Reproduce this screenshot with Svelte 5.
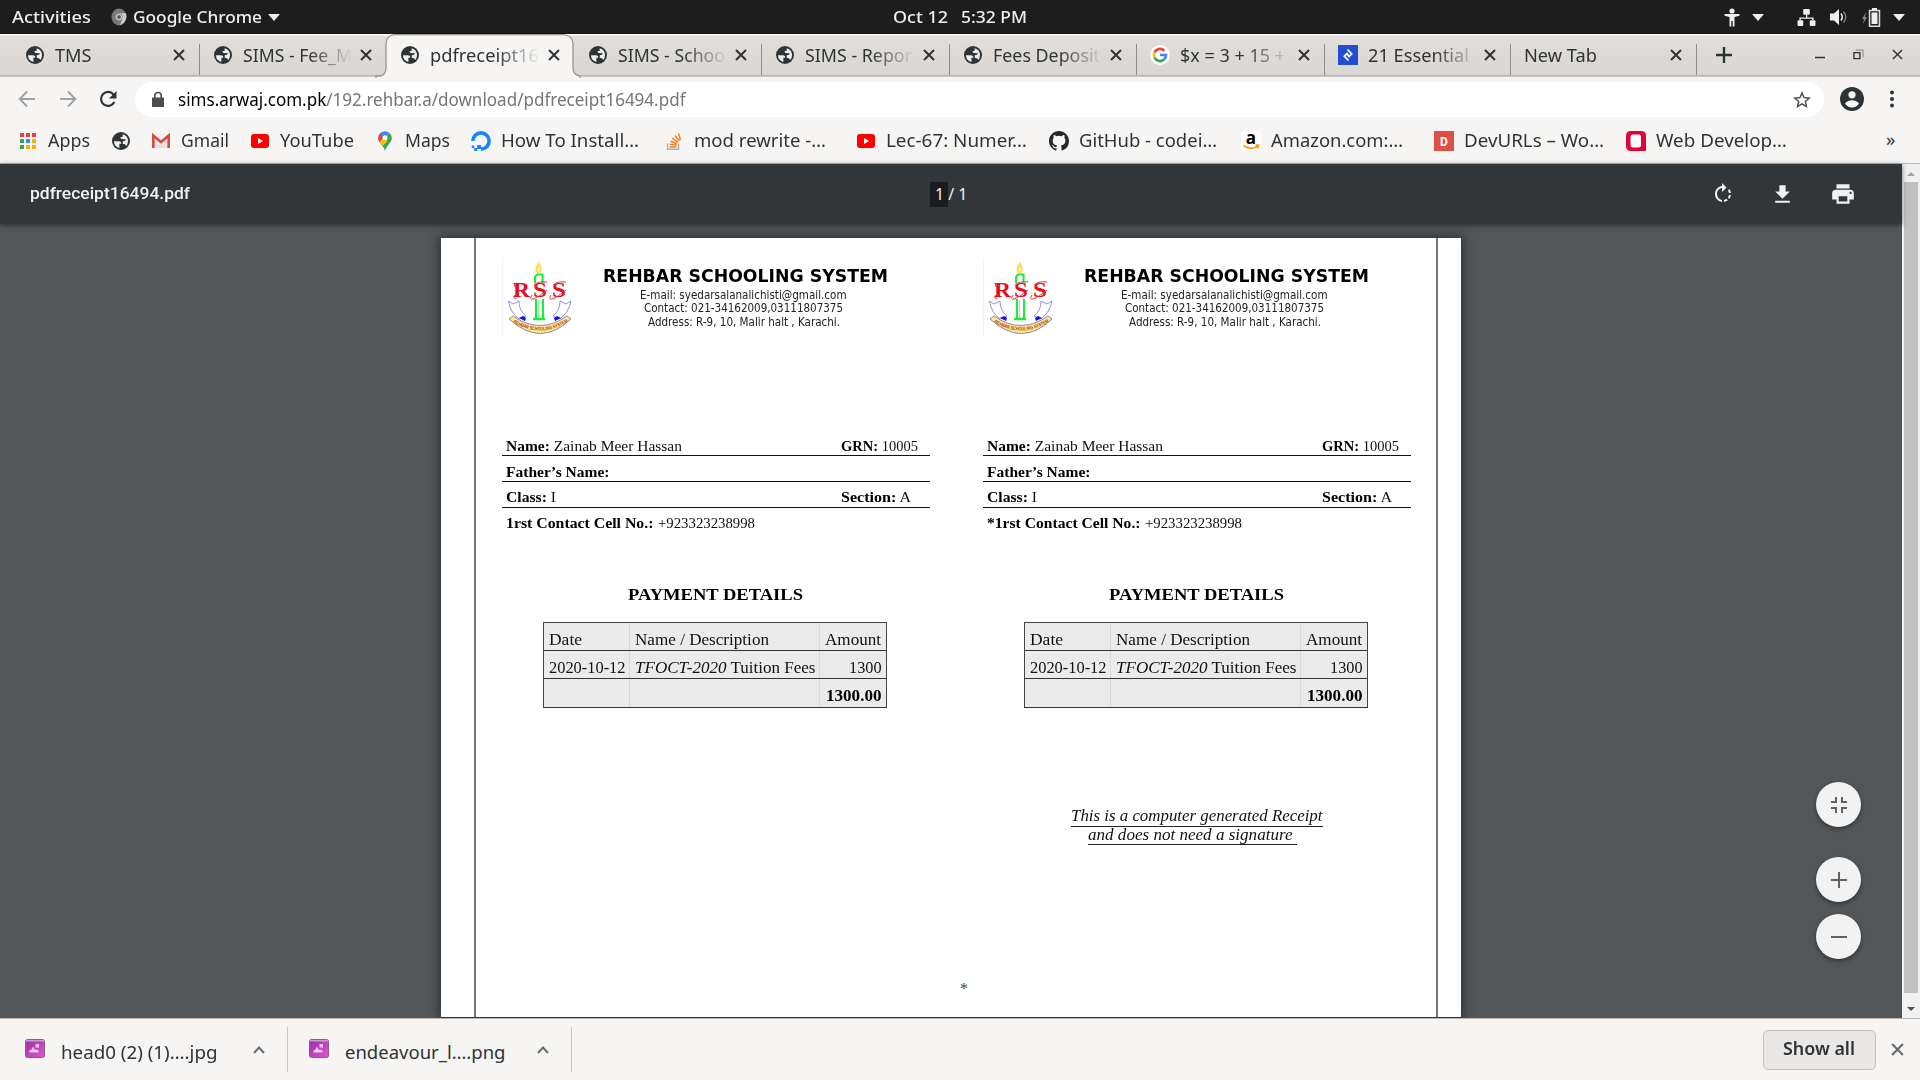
<script>
  // Scales a run of text horizontally so that it fills the given width.
  function fit(node, width) {
    const range = document.createRange();
    range.selectNodeContents(node);
    const natural = range.getBoundingClientRect().width;
    node.style.width = `${width}px`;
    node.style.transform = `scaleX(${width / natural})`;
  }

  const tabs = [
    { icon: 'globe', title: 'TMS', w: 36.5 },
    { icon: 'globe', title: 'SIMS - Fee_M', w: 109 },
    { icon: 'globe', title: 'pdfreceipt16', w: 109, active: true },
    { icon: 'globe', title: 'SIMS - Schoo', w: 107 },
    { icon: 'globe', title: 'SIMS - Repor', w: 107 },
    { icon: 'globe', title: 'Fees Deposit', w: 107 },
    { icon: 'google', title: '$x = 3 + 15 +', w: 105 },
    { icon: 'toptal', title: '21 Essential', w: 101 },
    { icon: null, title: 'New Tab', w: 73 }
  ];

  const bookmarks = [
    { icon: 'apps', label: 'Apps', w: 42, size: 93 },
    { icon: 'globe', label: '', w: 0, size: 40 },
    { icon: 'gmail', label: 'Gmail', w: 48, size: 99 },
    { icon: 'youtube', label: 'YouTube', w: 74, size: 125 },
    { icon: 'maps', label: 'Maps', w: 45, size: 96 },
    { icon: 'ocean', label: 'How To Install…', w: 138, size: 193 },
    { icon: 'stack', label: 'mod rewrite -…', w: 132, size: 192 },
    { icon: 'youtube', label: 'Lec-67: Numer…', w: 141, size: 193 },
    { icon: 'github', label: 'GitHub - codei…', w: 138, size: 192 },
    { icon: 'amazon', label: 'Amazon.com:…', w: 132, size: 193 },
    { icon: 'devurls', label: 'DevURLs – Wo…', w: 140, size: 192 },
    { icon: 'web', label: 'Web Develop…', w: 131, size: 180 }
  ];

  const downloads = [
    { name: 'head0 (2) (1)….jpg', w: 156.5 },
    { name: 'endeavour_l….png', w: 160.5 }
  ];

  const copies = [
    { mark: '', contactWidth: 147.5, note: false },
    { mark: '*', contactWidth: 153.5, note: true }
  ];
</script>

{#snippet icon(name)}
  {#if name === 'globe'}
    <svg class="icon" viewBox="0 0 20 20"><circle cx="10" cy="10" r="9" fill="#2e3436" /><path fill="#f0eeec" d="M3 10.300H8.200Q10.600 10.600 10.300 12.800H8.400V17Q3 15.300 3 10.300zM11.600 3.200Q17 4.600 17 10.300 17 13.200 15.200 15 14.600 13 12.800 13H11.800V10.200Q14.600 10.200 15 8.200L10.400 8 9.300 6.300 11.800 5.700z" /></svg>
  {:else if name === 'google'}
    <svg class="icon" viewBox="0 0 20 20"><circle cx="10" cy="10" r="10" fill="#fff" />
      <g fill="none" stroke-width="2.700"><path stroke="#ea4335" d="M4.600 7.300A6 6 0 0 1 14.300 5.800" /><path stroke="#fbbc05" d="M4.600 12.700A6 6 0 0 1 4.600 7.300" /><path stroke="#34a853" d="M4.600 12.700A6 6 0 0 0 14 14.500" /><path stroke="#4285f4" d="M10 10H16A6 6 0 0 1 14 14.500" /></g></svg>
  {:else if name === 'toptal'}
    <svg class="icon" viewBox="0 0 20 20"><path fill="#204ecf" d="M0 0h20v20H0z" /><path fill="none" stroke="#fff" stroke-width="1.700" d="M9.500 4.500l4.200 4.500-3.400 3.200M10.500 15.500l-4.200-4.300 3.400-3.400M8.200 8.200l3.700 3.800" /></svg>
  {:else if name === 'apps'}
    <svg class="icon" viewBox="0 0 20 20"><path fill="#f23a3a" d="M2 2h4v4H2zM8 2h4v4H8zM14 2h4v4h-4z" /><path fill="#34a853" d="M2 8h4v4H2zM2 14h4v4H2z" /><path fill="#2f8af5" d="M8 8h4v4H8z" /><path fill="#fbac05" d="M14 8h4v4h-4zM8 14h4v4H8zM14 14h4v4h-4z" /></svg>
  {:else if name === 'gmail'}
    <svg class="icon" viewBox="0 0 20 20"><path fill="#e4e4e4" d="M1 3.500h18v13.500H1z" /><path fill="#f7f7f7" d="M3 4l7 6 7-6z" /><path fill="none" stroke="#d54b3d" stroke-width="2.600" d="M2.300 17V4.500L10 11l7.700-6.500V17" /></svg>
  {:else if name === 'youtube'}
    <svg class="icon" viewBox="0 0 20 20"><rect x="1" y="3" width="18" height="14" rx="3" fill="#f00" /><path fill="#fff" d="M8 7l5 3-5 3z" /></svg>
  {:else if name === 'maps'}
    <svg class="icon" viewBox="0 0 20 20"><path fill="#34a853" d="M10 20C9 15 3.500 12 3.200 6.800h13.600C16.500 12 11 15 10 20z" /><path fill="#fbbc05" d="M4.300 10.500L13 4l2 4-7.500 7z" /><path fill="#ea4335" d="M3.200 7A6.800 6.800 0 0 1 4.800 2.500L8.800 6l-4.500 5Q3.200 9 3.200 7z" /><path fill="#4285f4" d="M4.800 2.500A6.800 6.800 0 0 1 14.500 2L9.500 8z" /><path fill="#34a853" d="M14.500 2a6.800 6.800 0 0 1 1.300 8L12 12V5z" /><circle cx="10" cy="6.800" r="2.500" fill="#fff" /></svg>
  {:else if name === 'ocean'}
    <svg class="icon" viewBox="0 0 20 20"><path fill="none" stroke="#1588ff" stroke-width="3.600" d="M1.900 10A8.100 8.100 0 1 1 10 18.100" /><path fill="#1588ff" d="M6.200 14H10v4H6.200zM3.200 17h3v3h-3zM.8 14.500h2.400V17H.8z" /></svg>
  {:else if name === 'stack'}
    <svg class="icon" viewBox="0 0 20 20"><path fill="none" stroke="#aeb2b5" stroke-width="1.500" d="M3.500 12.500v5.700h11v-5.700" /><path fill="none" stroke="#f48024" stroke-width="1.500" d="M5.500 16h7M5.700 13.200l7 1M6.500 10.200l6.500 2.500M8.300 7.200l5.700 4.200M11 4.500l4.300 5.500M14.500 2.500l2 6.500" /></svg>
  {:else if name === 'github'}
    <svg class="icon" viewBox="0 0 16 16"><path fill="#24292e" d="M8 0C3.580 0 0 3.580 0 8c0 3.540 2.290 6.530 5.470 7.590.4.070.55-.17.55-.38 0-.19-.01-.82-.01-1.490-2.010.37-2.530-.49-2.690-.94-.09-.23-.48-.94-.82-1.130-.28-.15-.68-.52-.01-.53.63-.01 1.080.58 1.230.82.72 1.210 1.870.87 2.330.66.070-.52.28-.87.51-1.070-1.780-.2-3.640-.89-3.640-3.950 0-.87.31-1.590.82-2.150-.08-.2-.36-1.020.08-2.120 0 0 .67-.21 2.200.82a7.600 7.600 0 0 1 4 0c1.530-1.040 2.200-.82 2.200-.82.44 1.100.16 1.920.08 2.120.51.56.82 1.270.82 2.150 0 3.070-1.870 3.750-3.650 3.950.29.25.54.73.54 1.480 0 1.070-.01 1.930-.01 2.200 0 .21.15.46.55.38A8 8 0 0 0 16 8c0-4.420-3.580-8-8-8z" /></svg>
  {:else if name === 'amazon'}
    <svg class="icon" viewBox="0 0 20 20"><rect width="20" height="20" rx="3" fill="#fff" /><text x="10" y="12.800" text-anchor="middle" class="amazon-a">a</text><path fill="none" stroke="#f90" stroke-width="1.700" d="M2.500 14.800q7 4.500 14 .8M14.500 14.300l3-.1-.8 3" /></svg>
  {:else if name === 'devurls'}
    <svg class="icon" viewBox="0 0 20 20"><path fill="#dd5144" d="M0 0h20v20H0z" /><text x="10" y="14.500" text-anchor="middle" class="dev-d">D</text></svg>
  {:else if name === 'web'}
    <svg class="icon" viewBox="0 0 20 20"><path fill="#e4003a" d="M5 0h10q5 0 5 5v15H5q-5 0-5-5V5q0-5 5-5z" /><rect x="4.500" y="3.500" width="10.500" height="13" rx="2.500" fill="#fff" /></svg>
  {/if}
{/snippet}

{#snippet cross(size, weight)}
  <svg width={size} height={size} viewBox="0 0 12 12"><path d="M1 1l10 10M11 1L1 11" fill="none" stroke="currentColor" stroke-width={weight} /></svg>
{/snippet}

{#snippet logo()}
  <svg class="logo" viewBox="0 0 70 78">
    <path d="M.5 0v78" stroke="#f3f3f3" />
    <path fill="#fff" stroke="#16ee3a" stroke-width="2" d="M33 25v-6l2-2.500h5.500V25M34 41v20M41 41v20" />
    <path stroke="#8af59b" d="M36.500 42v18" />
    <path stroke="#16ee3a" stroke-width="2.500" d="M31 61h12" />
    <path fill="#ffd95a" d="M37 4q4 6 2 10-2 3-5 0-2-4 3-10z" /><path fill="#fff3a0" d="M37 8q2 3 0 6-3-2 0-6z" />
    <g fill="#fff" stroke="#8484d8" stroke-width=".9"><path d="M6.500 43l4.500 3 6-3q0 10 7 15l-7 3Q8 54 6.500 43zM69 43l-5 3-6-3q0 10-7 15l7 3q9-7 11-18z" /></g>
    <path fill="#1414d8" d="M17 60l4-2 3 2-1 3zM59 60l-4-2-3 2 1 3z" />
    <path fill="#ffe98c" stroke="#6a6ab5" stroke-width=".8" d="M7 61l4-3q27 19 54 0l4 3q-30 29-62 0z" />
    <path id="banner" fill="none" d="M11 64.500q27 16 54 0" />
    <text class="banner-text"><textPath href="#banner" textLength="58" lengthAdjust="spacingAndGlyphs">REHBAR SCHOOLING SYSTEM</textPath></text>
    <text class="letters" x="11" y="38.500" textLength="17" lengthAdjust="spacingAndGlyphs">R</text><text class="letters" x="31" y="38.500" textLength="14" lengthAdjust="spacingAndGlyphs">S</text><text class="letters" x="50" y="38.500" textLength="14" lengthAdjust="spacingAndGlyphs">S</text>
    <path fill="none" stroke="#e5202c" stroke-width=".9" d="M15 25q-4 1-2 4M14 41q-4-1-1-4l4 2M30 37q-3 5 1 4t14-9M49 37q-3 5 1 4t14-9M32 27q4-4 13-3M51 27q4-4 13-3" />
  </svg>
{/snippet}

<div class="desktop">
  <header class="panel">
    <div class="panel-left">
      <span class="fit" use:fit={79}>Activities</span>
      <svg class="chrome" width="16" height="18" viewBox="0 0 17 19"><ellipse cx="8.500" cy="9.500" rx="8" ry="9" fill="#777" /><path fill="#cfcfcf" d="M8.500 5.500H16q2 8-6.500 13l2.500-7z" /><circle cx="8.500" cy="9.500" r="4" fill="#999" /><circle cx="8.500" cy="9.500" r="2.600" fill="#555" stroke="#ddd" /></svg>
      <span class="fit" use:fit={129}>Google Chrome</span>
      <i class="caret"></i>
    </div>
    <div class="clock"><span class="fit" use:fit={55}>Oct 12</span><span class="fit" use:fit={66}>5:32 PM</span></div>
    <div class="panel-right">
      <svg width="16" height="19" viewBox="0 0 16 19"><g fill="#eee"><circle cx="8" cy="3" r="2.600" /><path d="M.5 6h15v1.800L10.500 9v9.500H8.700V13H7.300v5.500H5.500V9L.5 7.800z" /></g></svg>
      <i class="caret"></i>
      <svg class="net" width="19" height="17" viewBox="0 0 19 18"><g fill="#eee"><rect x="6" width="7" height="6" rx="1" /><rect y="12" width="6" height="6" rx="1" /><rect x="13" y="12" width="6" height="6" rx="1" /><path d="M9 6h1.300v3H17v3h-1.500v-1.600h-12V12H2V9h7z" /></g></svg>
      <svg class="vol" width="19" height="18" viewBox="0 0 19 18"><path fill="#eee" d="M0 5.500h4L9 1v16l-5-4.500H0z" /><path fill="none" stroke="#eee" stroke-width="1.500" d="M11 5.500q2.500 3.500 0 7" /><path fill="none" stroke="#888" stroke-width="1.300" d="M13.500 3.500q4.500 5.500 0 11" /></svg>
      <svg class="bat" width="19" height="19" viewBox="0 0 19 19"><path fill="#888" d="M4 4L0 11h2l-1 5 4-7H3z" /><path fill="none" stroke="#ddd" stroke-width="1.500" d="M7.500 2.500h10v15.700h-10z" /><path fill="#eee" d="M10 0h5v2h-5zM9.500 4.500h6v11.500h-6z" /></svg>
      <i class="caret"></i>
    </div>
  </header>

  <nav class="tabs">
    {#each tabs as tab}
      <div class="tab" class:active={tab.active} class:blank={!tab.icon}>
        {#if tab.active}<svg class="shape" viewBox="0 0 200 43" width="200" height="43"><path fill="#f6f5f3" stroke="#989692" stroke-width="1.300" d="M-3 44V42H1Q7 41 7 34V9Q8 1 16 .7H184Q193 1 194 9V34Q194 41 201 42V44" /></svg>{/if}
        {#if tab.icon}<span class="favicon">{@render icon(tab.icon)}</span>{/if}
        <span class="title" class:fade={tab.w > 80}><span class="fit" use:fit={tab.w}>{tab.title}</span></span>
        <span class="close">{@render cross(12, 2)}</span>
      </div>
    {/each}
    <svg class="plus" width="16" height="16" viewBox="0 0 16 16"><path stroke="#2e3436" stroke-width="2.400" d="M8 0v16M0 8h16" /></svg>
    <div class="window-buttons">
      <svg width="10" height="12" viewBox="0 0 10 12"><path stroke="#2e3436" stroke-width="1.500" d="M0 8.500h10" /></svg>
      <svg width="11" height="11" viewBox="0 0 12 12"><path fill="none" stroke="#999" stroke-width="1.300" d="M3 1.300h8v8" /><path fill="none" stroke="#2e3436" stroke-width="1.500" d="M1 4h6.500v6.500H1z" /></svg>
      {@render cross(11, 1.500)}
    </div>
  </nav>

  <div class="toolbar">
    <div class="nav-icons">
      <svg width="18" height="18" viewBox="0 0 18 18"><path fill="none" stroke="#a0a2a2" stroke-width="1.800" d="M17 9H2M9 1.500L1.700 9 9 16.500" /></svg>
      <svg width="18" height="18" viewBox="0 0 18 18"><path fill="none" stroke="#a0a2a2" stroke-width="1.800" d="M1 9h15M9 1.500L16.300 9 9 16.500" /></svg>
      <svg width="18" height="18" viewBox="0 0 18 18"><path fill="none" stroke="#2e3436" stroke-width="2.200" d="M15.300 12A7 7 0 1 1 14.500 4.600" /><path fill="#2e3436" d="M17.500 1v7.500H10z" /></svg>
    </div>
    <div class="omnibox">
      <svg width="12" height="15" viewBox="0 0 12 15"><path fill="#4b4d4e" d="M0 5.500h12V15H0z" /><path fill="none" stroke="#4b4d4e" stroke-width="1.600" d="M2.800 6V3.700a3.200 3.200 0 0 1 6.400 0V6" /></svg>
      <span class="url fit" use:fit={507.500}><b>sims.arwaj.com.pk</b>/192.rehbar.a/download/pdfreceipt16494.pdf</span>
      <svg class="star" width="18" height="18" viewBox="2 2 20 20"><path fill="#4b4d4e" d="M22 9.240l-7.190-.62L12 2 9.190 8.630 2 9.240l5.460 4.730L5.820 21 12 17.270 18.180 21l-1.630-7.030L22 9.240zM12 15.400l-3.760 2.270 1-4.280-3.320-2.880 4.380-.38L12 6.100l1.710 4.040 4.380.38-3.320 2.880 1 4.280L12 15.400z" /></svg>
    </div>
    <svg class="profile" width="24" height="24" viewBox="0 0 24 24"><circle cx="12" cy="12" r="12" fill="#2e3436" /><circle cx="12" cy="7.800" r="3.600" fill="#f6f5f3" /><path fill="#f6f5f3" d="M5 16.500q3-3.300 7-3.300t7 3.300q-2.500 4-7 4t-7-4z" /></svg>
    <svg width="4" height="18" viewBox="0 0 4 18"><g fill="#2e3436"><circle cx="2" cy="2.500" r="2" /><circle cx="2" cy="9" r="2" /><circle cx="2" cy="15.500" r="2" /></g></svg>
  </div>

  <div class="bookmarks">
    {#each bookmarks as b}
      <div class="bookmark" style:width="{b.size}px">
        {@render icon(b.icon)}
        {#if b.label}<span class="fit" use:fit={b.w}>{b.label}</span>{/if}
      </div>
    {/each}
    <span class="more">»</span>
  </div>

  <div class="viewer">
    <main>
      <div class="pdf-bar">
        <span class="file fit" use:fit={160}>pdfreceipt16494.pdf</span>
        <span class="pages"><span class="current">1</span><span>/ 1</span></span>
        <div class="pdf-tools">
          <svg width="24" height="24" viewBox="0 0 24 24"><path fill="#f1f1f1" d="M15.550 5.550L11 1v3.070C7.060 4.560 4 7.920 4 12s3.050 7.440 7 7.930v-2.020c-2.840-.48-5-2.940-5-5.910s2.160-5.430 5-5.910V10l4.550-4.450zM19.930 11c-.17-1.390-.72-2.730-1.620-3.890l-1.420 1.420c.54.75.88 1.600 1.020 2.470h2.020zM13 17.900v2.020c1.390-.17 2.740-.71 3.900-1.610l-1.440-1.440c-.75.54-1.590.89-2.460 1.030zm3.890-2.420l1.420 1.410c.9-1.160 1.450-2.500 1.620-3.890h-2.020c-.14.87-.48 1.720-1.020 2.480z" /></svg>
          <svg width="25" height="25" viewBox="0 0 24 24"><path fill="#f1f1f1" d="M19 9h-4V3H9v6H5l7 7 7-7zM5 18v2h14v-2H5z" /></svg>
          <svg width="26" height="26" viewBox="0 0 24 24"><path fill="#f1f1f1" d="M19 8H5c-1.660 0-3 1.340-3 3v6h4v4h12v-4h4v-6c0-1.660-1.340-3-3-3zm-3 11H8v-5h8v5zm3-7c-.55 0-1-.45-1-1s.45-1 1-1 1 .45 1 1-.45 1-1 1zm-1-9H6v4h12V3z" /></svg>
        </div>
      </div>

      <div class="canvas">
        <article class="page">
          <div class="sheet">
            {#each copies as copy}
              <section>
                <div class="head">
                  {@render logo()}
                  <div class="school">
                    <h1 class="fit" use:fit={285}>REHBAR SCHOOLING SYSTEM</h1>
                    <p class="fit" use:fit={206.500}>E-mail: syedarsalanalichisti@gmail.com</p>
                    <p class="fit" use:fit={199}>Contact: 021-34162009,03111807375</p>
                    <p class="fit address" use:fit={192}>Address: R-9, 10, Malir halt , Karachi.</p>
                  </div>
                </div>
                <div class="field"><span class="fit" use:fit={176}><b>Name:</b> Zainab Meer Hassan</span><span class="second"><span class="fit" use:fit={77}><b>GRN:</b> 10005</span></span></div>
                <div class="field"><span class="fit" use:fit={103.500}><b>Father’s Name:</b></span></div>
                <div class="field low"><span class="fit" use:fit={50}><b>Class:</b> I</span><span class="second"><span class="fit" use:fit={70}><b>Section:</b> A</span></span></div>
                <div class="field low last"><b class="fit" use:fit={copy.contactWidth}>{copy.mark}1rst Contact Cell No.:</b><span class="phone fit" use:fit={97}>+923323238998</span></div>
                <h2><span class="fit" use:fit={175}>PAYMENT DETAILS</span></h2>
                <div class="table">
                  <div class="row">
                    <span class="cell"><span class="fit" use:fit={33}>Date</span></span>
                    <span class="cell"><span class="fit" use:fit={134}>Name / Description</span></span>
                    <span class="cell end"><span class="fit" use:fit={56}>Amount</span></span>
                  </div>
                  <div class="row">
                    <span class="cell"><span class="fit" use:fit={76.500}>2020-10-12</span></span>
                    <span class="cell"><span class="fit" use:fit={180.500}><em>TFOCT-2020</em> Tuition Fees</span></span>
                    <span class="cell end"><span class="fit" use:fit={32.500}>1300</span></span>
                  </div>
                  <div class="row">
                    <span class="cell"></span>
                    <span class="cell"></span>
                    <span class="cell end"><b class="fit" use:fit={55.500}>1300.00</b></span>
                  </div>
                </div>
                {#if copy.note}
                  <div class="note">
                    <div class="line"><em class="fit" use:fit={251.500}>This is a computer generated Receipt</em></div>
                    <div class="line short"><em class="fit" use:fit={204.500}>and does not need a signature</em></div>
                  </div>
                {/if}
              </section>
            {/each}
          </div>
          <div class="star-mark">*</div>
        </article>
        <div class="zoom">
          <button aria-label="Fit to page"><svg width="16" height="16" viewBox="0 0 16 16"><path fill="none" stroke="#616161" stroke-width="2" d="M0 5h5V0M11 0v5h5M0 11h5v5M11 16v-5h5" /></svg></button>
          <button aria-label="Zoom in"><svg width="16" height="16" viewBox="0 0 16 16"><path stroke="#616161" stroke-width="2" d="M8 0v16M0 8h16" /></svg></button>
          <button aria-label="Zoom out"><svg width="16" height="16" viewBox="0 0 16 16"><path stroke="#616161" stroke-width="2" d="M0 8h16" /></svg></button>
        </div>
      </div>
    </main>
    <aside class="scroll">
      <i class="up"></i>
      <div class="thumb"></div>
      <i class="down"></i>
    </aside>
  </div>

  <footer>
    {#each downloads as d}
      <div class="download">
        <svg width="20" height="19" viewBox="0 0 20 19"><defs><linearGradient id="pic" x2="1" y2="1"><stop stop-color="#9a2fa5" /><stop offset="1" stop-color="#df58ce" /></linearGradient></defs><rect x=".5" y=".5" width="19" height="18" rx="2" fill="url(#pic)" stroke="#8a5b8c" /><path fill="#cf9bd3" d="M1 1h18v1.500H1z" /><path fill="#f3c6f0" d="M4.500 13.500v-2l2-1 1.500-3 1.500 3 4 .5v2.500zM10.500 5h3.500v3.500h-3.500z" /></svg>
        <span class="fit" use:fit={d.w}>{d.name}</span>
        <svg class="chev" width="12" height="8" viewBox="0 0 12 8"><path fill="none" stroke="#6b6f70" stroke-width="2" d="M1 7l5-5.500L11 7" /></svg>
      </div>
    {/each}
    <button class="show"><span class="fit" use:fit={72}>Show all</span></button>
    <span class="dismiss">{@render cross(13, 1.900)}</span>
  </footer>
</div>

<style>
  :global(body) { margin: 0; overflow: hidden; }
  .desktop { width: 1920px; height: 1080px; display: flex; flex-direction: column; overflow: hidden; background: #f6f5f3; color: #2e3436; font-family: "Noto Sans", "Open Sans", sans-serif; font-size: 18.500px; line-height: 24px; }
  .desktop * { box-sizing: border-box; }
  svg { display: block; flex: none; overflow: visible; }
  .icon { width: 20px; height: 20px; }
  .fit { display: inline-block; flex: none; white-space: pre; text-align: left; transform-origin: left center; }
  .amazon-a { font: bold 17px "Open Sans", sans-serif; fill: #000; }
  .dev-d { font: bold 12px Roboto, sans-serif; fill: #fff; }

  .panel { height: 34px; flex: none; display: grid; grid-template-columns: 893px 1fr auto; align-items: center; background: #1d1d1d; color: #eee; font-size: 16.300px; font-weight: 500; border-bottom: 1px solid #171217; padding-top: 1px; }
  .panel-left { display: flex; align-items: center; padding-left: 12px; }
  .chrome { margin: 0 6px 0 20px; }
  .clock { display: flex; gap: 13px; }
  .panel-right { display: flex; align-items: center; padding-right: 15.500px; }
  .panel-right .caret { margin-left: 12px; }
  .caret { border: 6.500px solid transparent; border-top: 7px solid #eee; border-bottom: 0; }
  .panel-left .caret { margin-left: 6px; }
  .net { margin-left: 33px; }
  .vol { margin-left: 14px; }
  .bat { margin-left: 13px; }

  .tabs { height: 43px; flex: none; display: flex; align-items: center; padding: 0 17px 0 11px; background: linear-gradient(#fff 1px, #e1dedb 2px, #dad6d2 41px, #989692 42px, #f6f5f3 43px); }
  .tab { position: relative; width: 187.500px; height: 43px; flex: none; display: flex; align-items: center; padding: 0 0 2px 14px; }
  .tab:nth-child(n + 8) { width: 186.100px; }
  .tab::after { content: ""; position: absolute; right: -1px; top: 10px; width: 1px; height: 31px; background: #8f8d89; }
  .tab:nth-child(2)::after, .tab.active::after { display: none; }
  .shape { position: absolute; left: -7px; top: 0; }
  .favicon { position: relative; margin-right: 10px; }
  .title { position: relative; width: 110px; height: 26px; line-height: 26px; }
  .fade { -webkit-mask-image: linear-gradient(90deg, #000 60%, transparent 100%); mask-image: linear-gradient(90deg, #000 60%, transparent 100%); }
  .blank .title { width: 140px; }
  .close { position: relative; margin-left: 7.500px; }
  .tab:nth-child(n + 8) .close { margin-left: 6px; }
  .plus { margin: -2px 0 0 20px; }
  .window-buttons { margin: -2px 0 0 auto; display: flex; align-items: center; gap: 28px; }

  .toolbar { height: 44px; flex: none; display: flex; align-items: center; padding: 0 26px 0 18px; }
  .nav-icons { display: flex; gap: 22.500px; width: 117px; }
  .omnibox { width: 1690px; height: 35px; border-radius: 18px; background: #fff; display: flex; align-items: center; padding: 0 13px 0 17px; margin-top: 1px; }
  .url { margin: -2px 0 0 14px; font-size: 17.500px; color: #747677; }
  .url b { font-weight: 400; color: #000; }
  .star { margin-left: auto; }
  .profile { margin: 0 26px 0 16px; }

  .bookmarks { height: 43px; flex: none; display: flex; align-items: center; padding: 0 0 3px 18px; border-bottom: 1px solid #bdb9b5; }
  .bookmark { display: flex; flex: none; align-items: center; gap: 10px; }
  .bookmark .fit { margin-top: -2px; }
  .more { margin: -3px 0 0 80px; }

  .viewer { flex: 1; min-height: 0; display: flex; }
  main { width: 1902px; background: #525659; display: flex; flex-direction: column; }
  .pdf-bar { position: relative; z-index: 1; height: 60px; flex: none; display: grid; grid-template-columns: 900px 1fr auto; align-items: center; padding: 0 47px 0 30px; background: #323639; color: #f1f1f1; box-shadow: 0 1px 5px rgba(0, 0, 0, 0.5); }
  .file { font: 500 17.200px/24px Roboto, sans-serif; margin-top: -2px; }
  .pages { display: flex; font-size: 16px; }
  .current { background: #191b1c; padding: 0 4px 1px 5px; }
  .pdf-tools { display: flex; align-items: center; gap: 35px; margin-right: -0.500px; }
  .canvas { flex: 1; min-height: 0; overflow: hidden; display: flex; padding: 14px 41px 0 441px; }
  .page { width: 1020px; flex: none; background: #fff; box-shadow: 0 0 10px 2px rgba(0, 0, 0, 0.45); padding: 0 23px 0 32.500px; border-bottom: 1px solid #333; color: #111; font-family: "Liberation Serif", serif; display: flex; flex-direction: column; }
  .sheet { flex: 1; min-height: 0; border: solid #777; border-width: 0 2px; display: grid; grid-template-columns: 481px 481px; padding-left: 26px; }
  section { width: 428px; }
  .head { height: 199px; display: flex; padding-top: 20px; }
  .logo { width: 70px; height: 78px; }
  .letters { font: bold 21px "Liberation Serif", serif; fill: #e5101c; }
  .banner-text { font: bold 5px "Liberation Sans", sans-serif; fill: #b5421c; }
  .school { margin-left: 31.500px; width: 285px; flex: none; display: flex; flex-direction: column; align-items: center; font-family: "DejaVu Sans", sans-serif; }
  h1 { margin: 6px 0 1px; font-size: 18.500px; line-height: 24px; color: #000; }
  p { margin: 0 4px 0 0; font-size: 11.600px; line-height: 12.500px; color: #222; }
  .address { margin-top: 2px; }
  .field { height: 26px; padding: 0 5px 1px 4.500px; border-bottom: 1px solid #111; display: flex; align-items: flex-end; font-size: 15.300px; line-height: 17px; }
  .field:nth-child(2) { height: 19px; }
  .field.low { padding-bottom: 2px; }
  .field.last { border-color: transparent; }
  .phone { margin-left: 4px; }
  .second { margin-left: auto; width: 84px; }
  .field b, .row b { color: #000; }
  h2 { margin: 49px 0 17px; height: 22px; font-size: 17.500px; line-height: 22px; color: #000; padding-left: 126px; }
  .table { width: 344px; margin-left: 41.500px; background: #ebebeb; border: solid #444; border-width: 1px 1.500px; border-bottom-color: #333; }
  .row { display: grid; grid-template-columns: 86px 190px 1fr; height: 28px; border-bottom: 1px solid #333; font-size: 15.800px; line-height: 20px; }
  .row:last-child { border-bottom: 0; }
  .cell { padding: 7px 4.500px 0 4.500px; border-right: 1px solid #d9d9d9; }
  .cell.end { border: 0; padding: 7px 5px 0 0; text-align: right; }
  .note { margin: 97px 0 0 88px; font-size: 16px; }
  .line { width: 252px; height: 22px; line-height: 22px; border-bottom: 1px solid #222; }
  .short { width: 209px; height: 18px; line-height: 16px; margin-left: 17px; }
  .star-mark { position: absolute; left: 960px; top: 977px; font-size: 16px; color: #444; }
  .zoom { margin-left: auto; display: flex; flex-direction: column; margin-top: 544px; }
  .zoom button { width: 45px; height: 45px; border: 0; border-radius: 50%; background: #f2f2f2; display: grid; place-items: center; padding: 0; margin-bottom: 30px; box-shadow: 0 2px 4px rgba(0, 0, 0, 0.4); }
  .zoom button:nth-child(2) { margin-bottom: 12px; }
  .scroll { width: 18px; background: #f1f1f1; display: flex; flex-direction: column; align-items: center; }
  .up { border: 4px solid transparent; border-top: 0; border-bottom: 4px solid #a3a3a3; margin: 8px 0 6px; }
  .thumb { width: 14px; height: 811px; background: #c1c1c1; }
  .down { border: 4px solid transparent; border-bottom: 0; border-top: 4px solid #505050; margin-top: 14px; }

  footer { height: 62px; flex: none; display: flex; align-items: center; border-top: 1px solid #bdb7b2; padding-right: 16px; }
  .download { height: 45px; display: flex; align-items: center; width: 284px; padding: 0 22px 0 21px; border-right: 1px solid #c8c5c2; line-height: 30px; }
  .download:first-child { width: 288px; padding-left: 25px; }
  .download > svg:first-child { margin-top: -2px; }
  .download .fit { margin: 4px 0 0 16px; }
  .download .chev { margin: 0 0 0 auto; }
  .show { margin-left: auto; width: 113px; height: 40px; border: 1px solid #c6c1bb; border-radius: 5px; background: #e9e8e6; color: #2e3436; font: 600 17px/24px "Noto Sans", sans-serif; padding: 0 0 1px 19px; text-align: left; }
  .dismiss { margin-left: 15px; color: #666b6c; }
</style>
